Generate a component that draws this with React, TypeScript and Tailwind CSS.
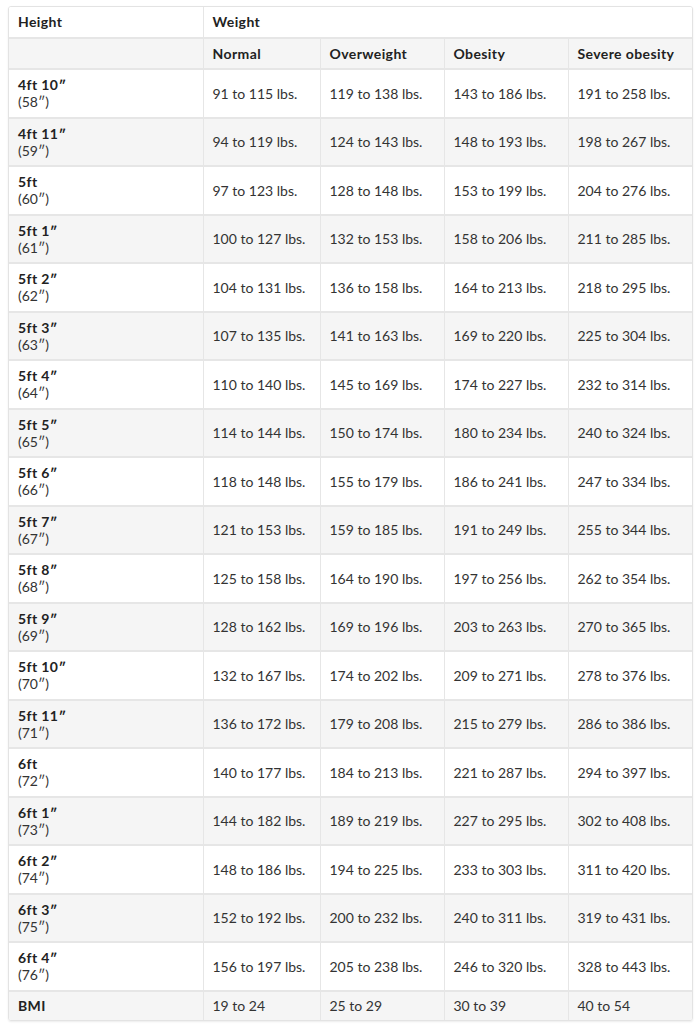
const rows: [string, string, string, string, string, string][] = [
  ["4ft 10″", "(58″)", "91 to 115 lbs.", "119 to 138 lbs.", "143 to 186 lbs.", "191 to 258 lbs."],
  ["4ft 11″", "(59″)", "94 to 119 lbs.", "124 to 143 lbs.", "148 to 193 lbs.", "198 to 267 lbs."],
  ["5ft", "(60″)", "97 to 123 lbs.", "128 to 148 lbs.", "153 to 199 lbs.", "204 to 276 lbs."],
  ["5ft 1″", "(61″)", "100 to 127 lbs.", "132 to 153 lbs.", "158 to 206 lbs.", "211 to 285 lbs."],
  ["5ft 2″", "(62″)", "104 to 131 lbs.", "136 to 158 lbs.", "164 to 213 lbs.", "218 to 295 lbs."],
  ["5ft 3″", "(63″)", "107 to 135 lbs.", "141 to 163 lbs.", "169 to 220 lbs.", "225 to 304 lbs."],
  ["5ft 4″", "(64″)", "110 to 140 lbs.", "145 to 169 lbs.", "174 to 227 lbs.", "232 to 314 lbs."],
  ["5ft 5″", "(65″)", "114 to 144 lbs.", "150 to 174 lbs.", "180 to 234 lbs.", "240 to 324 lbs."],
  ["5ft 6″", "(66″)", "118 to 148 lbs.", "155 to 179 lbs.", "186 to 241 lbs.", "247 to 334 lbs."],
  ["5ft 7″", "(67″)", "121 to 153 lbs.", "159 to 185 lbs.", "191 to 249 lbs.", "255 to 344 lbs."],
  ["5ft 8″", "(68″)", "125 to 158 lbs.", "164 to 190 lbs.", "197 to 256 lbs.", "262 to 354 lbs."],
  ["5ft 9″", "(69″)", "128 to 162 lbs.", "169 to 196 lbs.", "203 to 263 lbs.", "270 to 365 lbs."],
  ["5ft 10″", "(70″)", "132 to 167 lbs.", "174 to 202 lbs.", "209 to 271 lbs.", "278 to 376 lbs."],
  ["5ft 11″", "(71″)", "136 to 172 lbs.", "179 to 208 lbs.", "215 to 279 lbs.", "286 to 386 lbs."],
  ["6ft", "(72″)", "140 to 177 lbs.", "184 to 213 lbs.", "221 to 287 lbs.", "294 to 397 lbs."],
  ["6ft 1″", "(73″)", "144 to 182 lbs.", "189 to 219 lbs.", "227 to 295 lbs.", "302 to 408 lbs."],
  ["6ft 2″", "(74″)", "148 to 186 lbs.", "194 to 225 lbs.", "233 to 303 lbs.", "311 to 420 lbs."],
  ["6ft 3″", "(75″)", "152 to 192 lbs.", "200 to 232 lbs.", "240 to 311 lbs.", "319 to 431 lbs."],
  ["6ft 4″", "(76″)", "156 to 197 lbs.", "205 to 238 lbs.", "246 to 320 lbs.", "328 to 443 lbs."],
];

const cell = "border-r border-b-2 border-[#e6e6e6] px-[9px] align-middle";
const bold = "font-bold text-[#222] tracking-[0.4px]";

export default function App() {
  return (
    <div className="bg-white min-h-screen pt-[6px] pl-[8px] font-['Lato','Noto_Sans',sans-serif] text-[14px] text-[#333]">
      <div className="w-[685px] rounded-[3px] border border-[#e3e3e3] shadow-[0_1px_2px_rgba(0,0,0,0.08)] overflow-hidden">
        <table className="w-full border-collapse table-fixed">
          <colgroup>
            <col className="w-[194px]" />
            <col className="w-[117px]" />
            <col className="w-[124px]" />
            <col className="w-[124px]" />
            <col />
          </colgroup>
          <thead>
            <tr className="h-[31px] bg-white">
              <th className={`${cell} text-left ${bold} pb-[1px]`}>Height</th>
              <th colSpan={4} className={`border-b-2 border-[#e6e6e6] px-[9px] pb-[1px] text-left ${bold}`}>
                Weight
              </th>
            </tr>
            <tr className="h-[31px] bg-[#f5f5f5]">
              <th className={cell}></th>
              <th className={`${cell} text-left ${bold}`}>Normal</th>
              <th className={`${cell} text-left ${bold}`}>Overweight</th>
              <th className={`${cell} text-left ${bold}`}>Obesity</th>
              <th className={`border-b-2 border-[#e6e6e6] px-[9px] text-left ${bold}`}>Severe obesity</th>
            </tr>
          </thead>
          <tbody>
            {rows.map((r, i) => (
              <tr key={r[0]} className={`h-[48.5px] ${i % 2 === 1 ? "bg-[#f5f5f5]" : "bg-white"}`}>
                <td className={`${cell} leading-[17px]`}>
                  <div className={bold}>{r[0]}</div>
                  <div>{r[1]}</div>
                </td>
                <td className={cell}>{r[2]}</td>
                <td className={cell}>{r[3]}</td>
                <td className={cell}>{r[4]}</td>
                <td className="border-b-2 border-[#e6e6e6] px-[9px]">{r[5]}</td>
              </tr>
            ))}
            <tr className="h-[29px] bg-[#f5f5f5]">
              <td className={`border-r border-[#e6e6e6] px-[9px] ${bold}`}>BMI</td>
              <td className="border-r border-[#e6e6e6] px-[9px]">19 to 24</td>
              <td className="border-r border-[#e6e6e6] px-[9px]">25 to 29</td>
              <td className="border-r border-[#e6e6e6] px-[9px]">30 to 39</td>
              <td className="px-[9px]">40 to 54</td>
            </tr>
          </tbody>
        </table>
      </div>
    </div>
  );
}
